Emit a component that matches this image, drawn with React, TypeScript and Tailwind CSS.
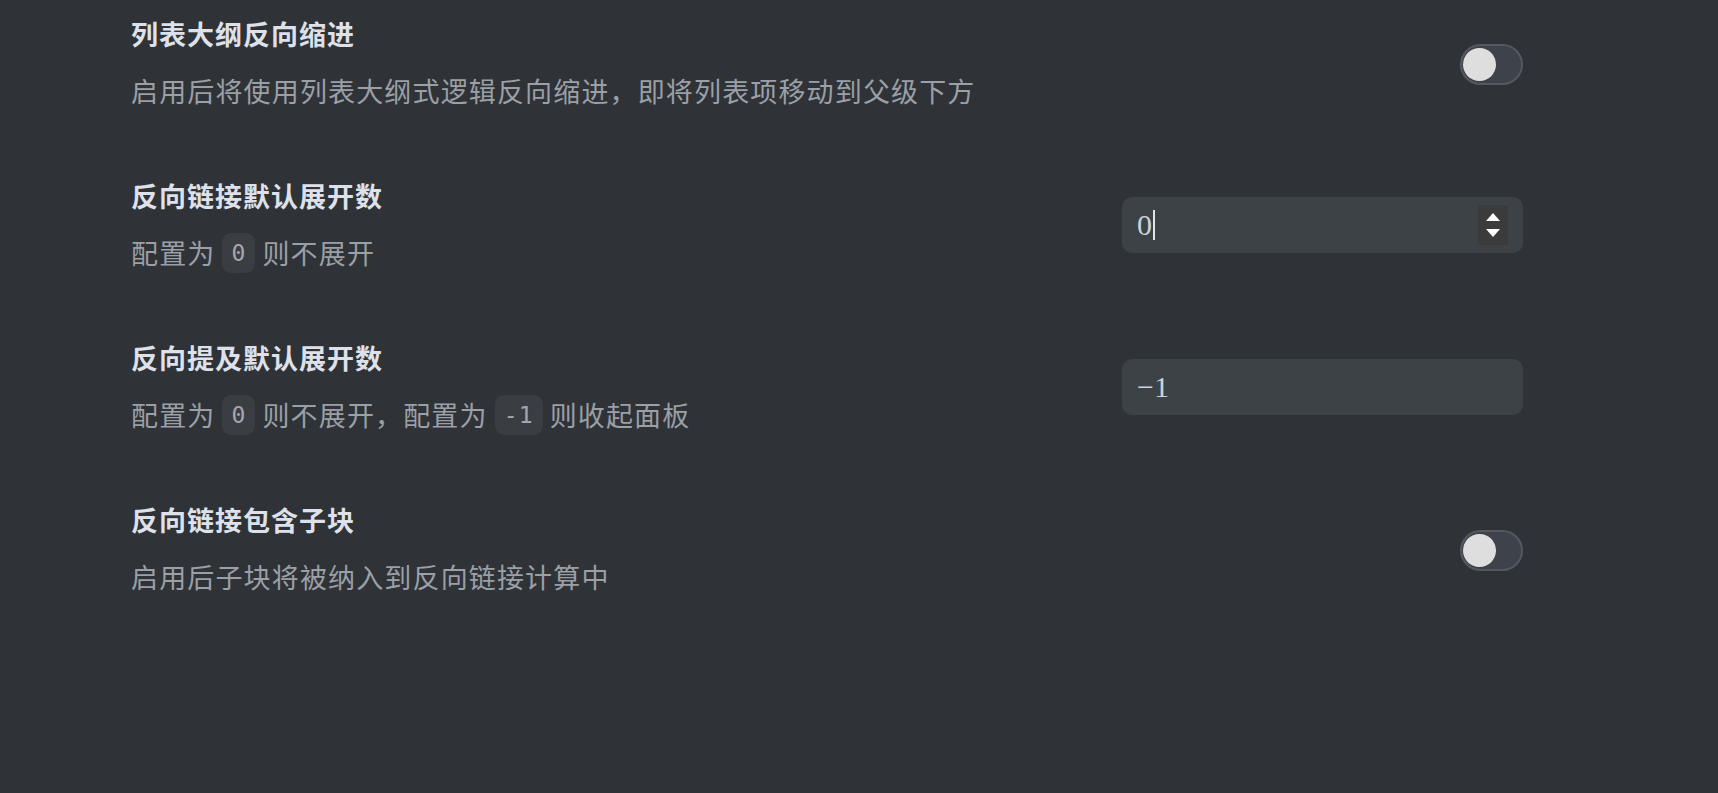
import { ReactNode } from "react";

const cjk = { fontFamily: '"Noto Sans CJK SC", "Noto Sans", sans-serif' };
const mono = { fontFamily: '"DejaVu Sans Mono", "Liberation Mono", monospace' };

function Code({ children }: { children: ReactNode }) {
  return (
    <span
      className="mx-[7px] inline-flex h-[40px] items-center rounded-[9px] bg-[#3a3e43] px-[9px] align-middle text-[23px] text-[#a3a7ad]"
      style={mono}
    >
      {children}
    </span>
  );
}

function Toggle() {
  return (
    <div className="mt-[3px] flex h-[41px] w-[63px] items-center rounded-full border-2 border-[#545961] bg-[#3e424a] px-[1px]">
      <div className="h-[33px] w-[33px] rounded-full bg-[#dedede]" />
    </div>
  );
}

function NumberInput({ value, spinner }: { value: string; spinner?: boolean }) {
  return (
    <div className="flex h-[56px] w-[401px] items-center rounded-[10px] bg-[#3d4246] pl-[15px] pr-[15px]">
      <span
        className="flex flex-1 items-center text-[30px] leading-none text-[#cdd1db]"
        style={{ fontFamily: '"Liberation Serif", serif' }}
      >
        {value}
        {spinner && <span className="ml-[1px] inline-block h-[30px] w-[2px] bg-[#dfe3ee]" />}
      </span>
      {spinner && (
        <div className="flex h-[40px] w-[30px] flex-col items-center justify-center gap-[8px] bg-[#3b3b3b]">
          <svg width="14" height="8" viewBox="0 0 14 8">
            <path d="M7 0 L14 8 L0 8 Z" fill="#ffffff" />
          </svg>
          <svg width="14" height="8" viewBox="0 0 14 8">
            <path d="M0 0 L14 0 L7 8 Z" fill="#ffffff" />
          </svg>
        </div>
      )}
    </div>
  );
}

function Row({
  title,
  desc,
  control,
}: {
  title: string;
  desc: ReactNode;
  control: ReactNode;
}) {
  return (
    <div className="flex items-center justify-between">
      <div className="flex flex-col gap-[17px]">
        <div className="text-[27px] font-bold leading-[40px] tracking-[1px] text-[#dfe1ea]">{title}</div>
        <div className="flex items-center text-[27px] leading-[40px] tracking-[1.15px] text-[#9b9fa6]">{desc}</div>
      </div>
      {control}
    </div>
  );
}

export default function App() {
  return (
    <div className="h-[793px] w-full overflow-hidden bg-[#2f3337]" style={cjk}>
      <div className="flex flex-col gap-[65px] pl-[131px] pr-[195px] pt-[14px]">
        <Row
          title="列表大纲反向缩进"
          desc="启用后将使用列表大纲式逻辑反向缩进，即将列表项移动到父级下方"
          control={<Toggle />}
        />
        <Row
          title="反向链接默认展开数"
          desc={
            <>
              配置为<Code>0</Code>则不展开
            </>
          }
          control={<NumberInput value="0" spinner />}
        />
        <Row
          title="反向提及默认展开数"
          desc={
            <>
              配置为<Code>0</Code>则不展开，配置为<Code>-1</Code>则收起面板
            </>
          }
          control={<NumberInput value="−1" />}
        />
        <Row
          title="反向链接包含子块"
          desc="启用后子块将被纳入到反向链接计算中"
          control={<Toggle />}
        />
      </div>
    </div>
  );
}
